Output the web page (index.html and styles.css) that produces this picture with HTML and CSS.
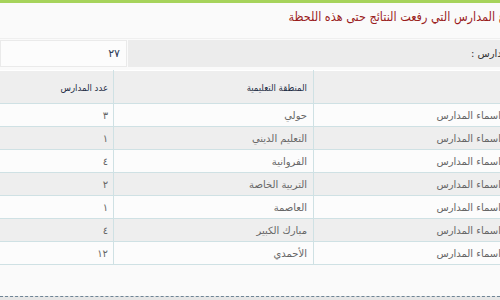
FILE: index.html
```html
<!DOCTYPE html>
<html lang="ar">
<head>
<meta charset="utf-8">
<title>المدارس</title>
<link rel="stylesheet" href="styles.css">
</head>
<body>
<div class="topbar"></div>
<div class="page">
  <h1 class="title">مجموع المدارس التي رفعت النتائج حتى هذه اللحظة</h1>
  <div class="summary">
    <div class="label">عدد المدارس :</div>
    <div class="value">٢٧</div>
  </div>
  <table class="grid">
    <thead>
      <tr><th class="c-name"></th><th class="c-region">المنطقة التعليمية</th><th class="c-count">عدد المدارس</th></tr>
    </thead>
    <tbody>
      <tr><td class="c-name">اسماء المدارس</td><td class="c-region">حولي</td><td class="c-count">٣</td></tr>
      <tr><td class="c-name">اسماء المدارس</td><td class="c-region">التعليم الديني</td><td class="c-count">١</td></tr>
      <tr><td class="c-name">اسماء المدارس</td><td class="c-region">الفروانية</td><td class="c-count">٤</td></tr>
      <tr><td class="c-name">اسماء المدارس</td><td class="c-region">التربية الخاصة</td><td class="c-count">٢</td></tr>
      <tr><td class="c-name">اسماء المدارس</td><td class="c-region">العاصمة</td><td class="c-count">١</td></tr>
      <tr><td class="c-name">اسماء المدارس</td><td class="c-region">مبارك الكبير</td><td class="c-count">٤</td></tr>
      <tr><td class="c-name">اسماء المدارس</td><td class="c-region">الأحمدي</td><td class="c-count">١٢</td></tr>
    </tbody>
  </table>
</div>
<div class="footer"></div>
</body>
</html>
```

FILE: styles.css
```css
html, body {
  margin: 0;
  padding: 0;
}
body {
  background: #fafafa;
  overflow: hidden;
  font-family: "DejaVu Sans", "Noto Sans", sans-serif;
  width: 500px;
  height: 300px;
}
.topbar {
  height: 3px;
  background: #a6d35b;
}
.page {
  width: 540px;
  direction: rtl;
}
.title {
  margin: 0;
  height: 35px;
  line-height: 28px;
  padding-right: 9px;
  font-family: "DejaVu Sans Condensed", "DejaVu Sans", sans-serif;
  font-stretch: condensed;
  font-size: 12.5px;
  font-weight: normal;
  color: #9a1d1d;
  border-bottom: 1px solid #efefef;
}
.summary {
  display: flex;
  gap: 1px;
  margin-top: 1px;
  height: 27px;
}
.label {
  flex: 1;
  background: #ececec;
  font-size: 10px;
  color: #333;
  line-height: 27px;
  padding-right: 7px;
}
.value {
  width: 127px;
  background: #fcfcfc;
  border: 1px solid #eaeaea;
  font-size: 11px;
  color: #2d3b55;
  line-height: 25px;
  box-sizing: border-box;
  padding-right: 6px;
}
.grid {
  margin-top: 3px;
  width: 540px;
  border-collapse: collapse;
  font-size: 10px;
  color: #666;
}
.grid th, .grid td {
  border: 1px solid #cfe1e4;
  text-align: right;
  padding: 0 6px;
}
.grid th {
  height: 32px;
  background: #eeeeee;
  color: #1f2d45;
  font-family: "DejaVu Sans Condensed", "DejaVu Sans", sans-serif;
  font-stretch: condensed;
  font-weight: normal;
  font-size: 9.5px;
  border-top: 1px solid #fff;
}
.grid td {
  height: 22px;
}
.grid tbody tr:nth-child(odd) td {
  background: #fcfcfc;
}
.grid tbody tr:nth-child(even) td {
  background: #eeeeee;
}
.grid .c-name {
  padding-right: 39px;
}
.grid .c-region {
  width: 187px;
}
.grid .c-count {
  width: 102px;
  padding-right: 5px;
  border-left: none;
}
.grid td.c-name, .grid th.c-name {
  border-right: none;
}
.footer {
  margin-top: 31px;
  height: 10px;
  border-top: 1px dashed #6e8495;
  background: #e6e6e6;
}
```
